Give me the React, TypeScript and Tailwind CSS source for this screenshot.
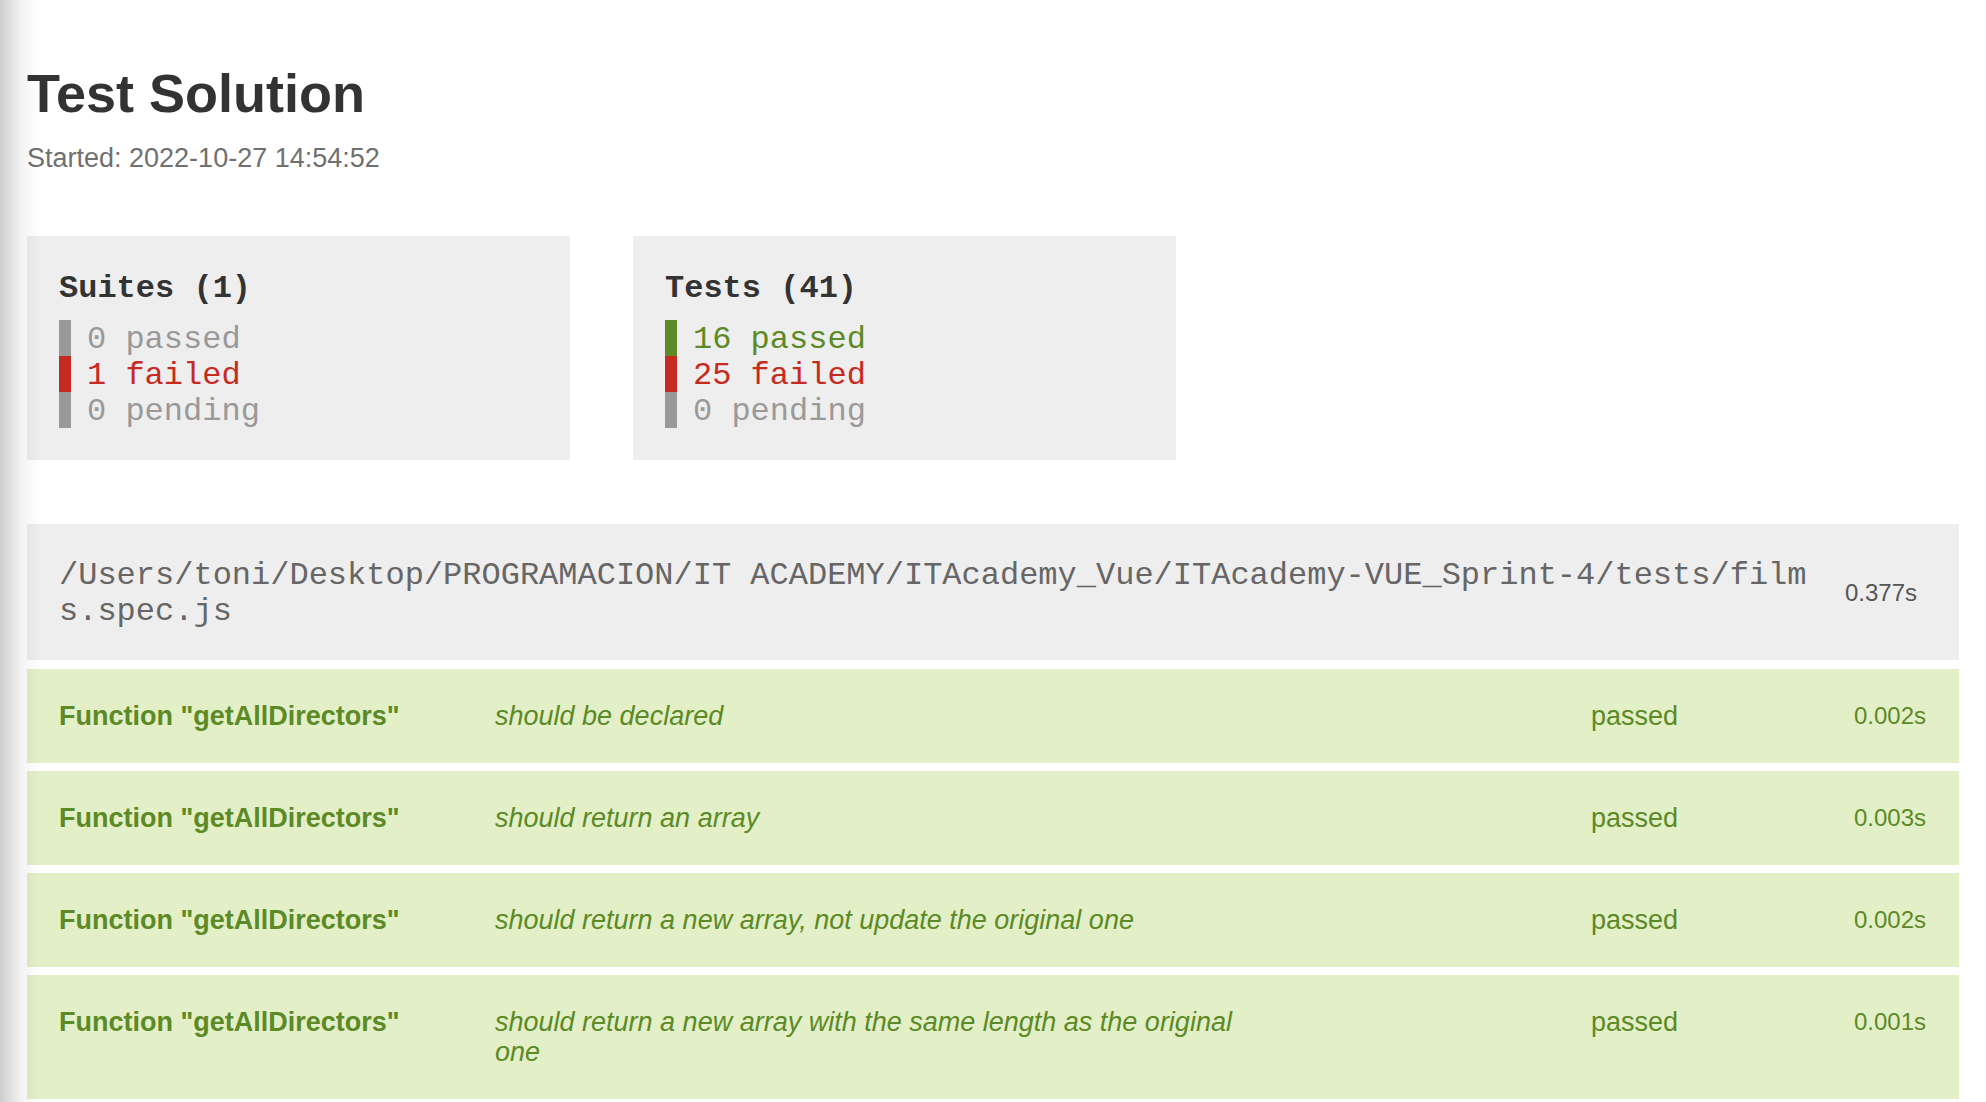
import React from "react";

const sans = "font-['Liberation_Sans',Arial,Helvetica,sans-serif]";
const mono = "font-['Liberation_Mono','Courier_New',monospace]";

type Stat = { label: string; bar: string; text: string };

function StatBox({ title, stats }: { title: string; stats: Stat[] }) {
  return (
    <div className="w-[543px] bg-[#eeeeee] p-8">
      <div className={`${mono} pt-[3px] text-[32px] leading-[36px] font-bold text-[#333333]`}>{title}</div>
      <div className="mt-[13px] flex flex-col">
        {stats.map((s) => (
          <div key={s.label} className="flex items-stretch">
            <div className={`w-[12px] h-[36px] ${s.bar}`} />
            <div className={`${mono} pl-4 pt-[4px] text-[32px] leading-[32px] ${s.text}`}>{s.label}</div>
          </div>
        ))}
      </div>
    </div>
  );
}

const tests = [
  { title: "should be declared", time: "0.002s" },
  { title: "should return an array", time: "0.003s" },
  { title: "should return a new array, not update the original one", time: "0.002s" },
  { title: "should return a new array with the same length as the original one", time: "0.001s" },
];

export default function App() {
  return (
    <div className={`relative min-h-screen bg-white ${sans}`}>
      <div className="px-[27px] pt-[62px] pb-10">
        <h1 className="text-[54px] leading-[62px] font-bold text-[#333333]">Test Solution</h1>
        <p className="mt-[19px] text-[27px] leading-[30px] text-[#707070]">Started: 2022-10-27 14:54:52</p>

        <div className="mt-[63px] flex gap-[63px]">
          <StatBox
            title="Suites (1)"
            stats={[
              { label: "0 passed", bar: "bg-[#999999]", text: "text-[#999999]" },
              { label: "1 failed", bar: "bg-[#c62a21]", text: "text-[#c62a21]" },
              { label: "0 pending", bar: "bg-[#999999]", text: "text-[#999999]" },
            ]}
          />
          <StatBox
            title="Tests (41)"
            stats={[
              { label: "16 passed", bar: "bg-[#5b8a26]", text: "text-[#5b8a26]" },
              { label: "25 failed", bar: "bg-[#c62a21]", text: "text-[#c62a21]" },
              { label: "0 pending", bar: "bg-[#999999]", text: "text-[#999999]" },
            ]}
          />
        </div>

        <div className="mt-[64px] flex items-center bg-[#eeeeee] pt-8 pb-[30px] pl-8 pr-[42px]">
          <div className={`${mono} w-[1755px] shrink-0 break-all pt-[2px] text-[32px] leading-[36px] text-[#666666]`}>
            /Users/toni/Desktop/PROGRAMACION/IT ACADEMY/ITAcademy_Vue/ITAcademy-VUE_Sprint-4/tests/films.spec.js
          </div>
          <div className="pl-[31px] text-[24px] leading-[30px] text-[#555555]">0.377s</div>
        </div>

        {tests.map((t, i) => (
          <div
            key={t.title}
            className={`${i === 0 ? "mt-[9px]" : "mt-[8px]"} grid grid-cols-[436px_1096px_auto_1fr] bg-[#e3efc6] py-[32px] pl-8 pr-[33px] text-[27px] leading-[30px] text-[#5b8a26]`}
          >
            <div className="font-bold">Function "getAllDirectors"</div>
            <div className="max-w-[747px] italic">{t.title}</div>
            <div>passed</div>
            <div className="text-right text-[24px]">{t.time}</div>
          </div>
        ))}
      </div>
      <div className="pointer-events-none fixed inset-y-0 left-0 w-[40px] bg-linear-to-r from-black/20 via-black/5 via-50% to-transparent" />
    </div>
  );
}
